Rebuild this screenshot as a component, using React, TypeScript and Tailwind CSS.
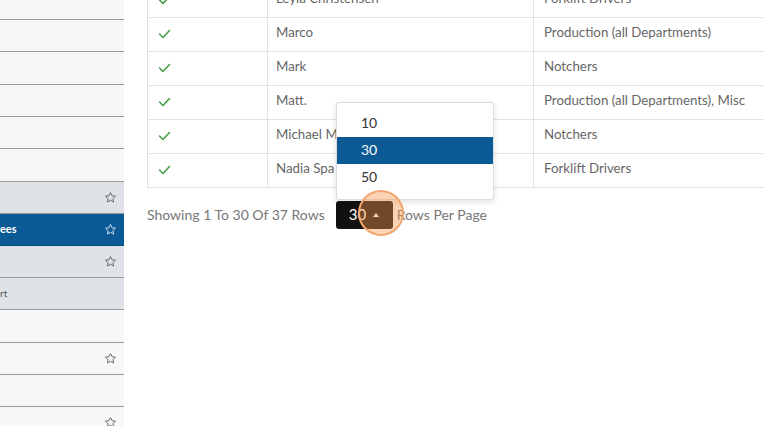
import React from "react";

const Star = ({ color = "#666" }: { color?: string }) => (
  <svg width="13" height="13" viewBox="0 0 24 24" fill="none" stroke={color} strokeWidth="1.8" strokeLinejoin="round">
    <path d="M12 2.8l2.8 5.9 6.4.8-4.7 4.4 1.2 6.4L12 17.2l-5.7 3.1 1.2-6.4-4.7-4.4 6.4-.8z" />
  </svg>
);

const Check = () => (
  <svg width="13" height="10" viewBox="0 0 13 10" fill="none" stroke="#45a045" strokeWidth="1.6" strokeLinecap="round" strokeLinejoin="round">
    <path d="M1.5 5l3.5 3.5 6.5-7" />
  </svg>
);

type SRow = { h: number; kind: "light" | "gray" | "blue"; star?: boolean; text?: string };

const sideRows: SRow[] = [
  { h: 20, kind: "light" },
  { h: 32, kind: "light" },
  { h: 33, kind: "light" },
  { h: 32, kind: "light" },
  { h: 32, kind: "light" },
  { h: 33, kind: "light" },
  { h: 32, kind: "gray", star: true },
  { h: 32, kind: "blue", star: true, text: "ees" },
  { h: 32, kind: "gray", star: true },
  { h: 32, kind: "gray", text: "rt" },
  { h: 33, kind: "light" },
  { h: 32, kind: "light", star: true },
  { h: 32, kind: "light" },
  { h: 32, kind: "light", star: true },
];

const rows = [
  { name: "Leyla Christensen", dept: "Forklift Drivers" },
  { name: "Marco", dept: "Production (all Departments)" },
  { name: "Mark", dept: "Notchers" },
  { name: "Matt.", dept: "Production (all Departments), Misc" },
  { name: "Michael M", dept: "Notchers" },
  { name: "Nadia Spa", dept: "Forklift Drivers" },
];

export default function App() {
  return (
    <div
      className="flex w-[764px] h-[426px] overflow-hidden bg-white"
      style={{ fontFamily: "Lato, 'Open Sans', sans-serif" }}
    >
      <div className="w-[124px] shrink-0 flex flex-col">
        {sideRows.map((r, i) => (
          <div
            key={i}
            style={{ height: r.h }}
            className={
              "shrink-0 flex items-center justify-between pr-[7px] border-b " +
              (r.kind === "blue"
                ? "bg-[#0b5a96] border-[#0a4c80]"
                : r.kind === "gray"
                ? "bg-[#dfe3e8] border-[#9a9a9a]"
                : "bg-[#f7f7f7] border-[#9a9a9a]")
            }
          >
            <span
              className={
                r.kind === "blue"
                  ? "text-[11px] font-bold text-white"
                  : "text-[10px] text-[#555]"
              }
            >
              {r.text ?? ""}
            </span>
            {r.star ? <Star color={r.kind === "blue" ? "#cfe0f0" : "#666"} /> : null}
          </div>
        ))}
      </div>

      <div className="flex-1 relative pl-[23px] overflow-hidden">
        <div className="mt-[-17px]">
          <table className="w-[640px] border-collapse table-fixed text-[13.3px] text-[#666]">
            <colgroup>
              <col className="w-[120px]" />
              <col className="w-[266px]" />
              <col />
            </colgroup>
            <tbody>
              {rows.map((r, i) => (
                <tr key={i} className="h-[34px]">
                  <td className="border border-[#e2e2e2] pl-[10px] pb-[2px] align-middle">
                    <Check />
                  </td>
                  <td className="border border-[#e2e2e2] pl-[8px] pb-[3px] whitespace-nowrap overflow-hidden">{r.name}</td>
                  <td className="border border-[#e2e2e2] pl-[10px] pb-[3px] whitespace-nowrap">{r.dept}</td>
                </tr>
              ))}
            </tbody>
          </table>
        </div>

        <div className="mt-[13px] flex items-center text-[14px] text-[#777]">
          <span className="pb-[2px]">Showing 1 To 30 Of 37 Rows</span>
          <div className="ml-[11px] w-[57px] h-[28px] rounded-[3px] bg-[#111] flex items-center pl-[13px] text-white">
            <span className="text-[15px] pb-[1px]">30</span>
            <span className="ml-[7px] w-0 h-0 border-l-[3px] border-r-[3px] border-b-[4px] border-l-transparent border-r-transparent border-b-white" />
          </div>
          <span className="ml-[4px] pb-[2px]">Rows Per Page</span>
        </div>

        <div className="absolute left-[212px] top-[102px] w-[158px] h-[98px] bg-white border border-[#dcdcdc] rounded-[3px] shadow-[0_2px_6px_rgba(0,0,0,0.12)] py-[7px] text-[14px] text-[#333]">
          <div className="h-[27px] flex items-center pl-[24px] pb-[3px]">10</div>
          <div className="h-[27px] flex items-center pl-[24px] pb-[3px] bg-[#0b5a96] text-white">30</div>
          <div className="h-[27px] flex items-center pl-[24px] pb-[3px]">50</div>
        </div>

        <div className="absolute left-[234px] top-[190px] w-[46px] h-[46px] rounded-full bg-[rgba(248,150,75,0.42)] border-2 border-[#f3a571]" />
      </div>
    </div>
  );
}
